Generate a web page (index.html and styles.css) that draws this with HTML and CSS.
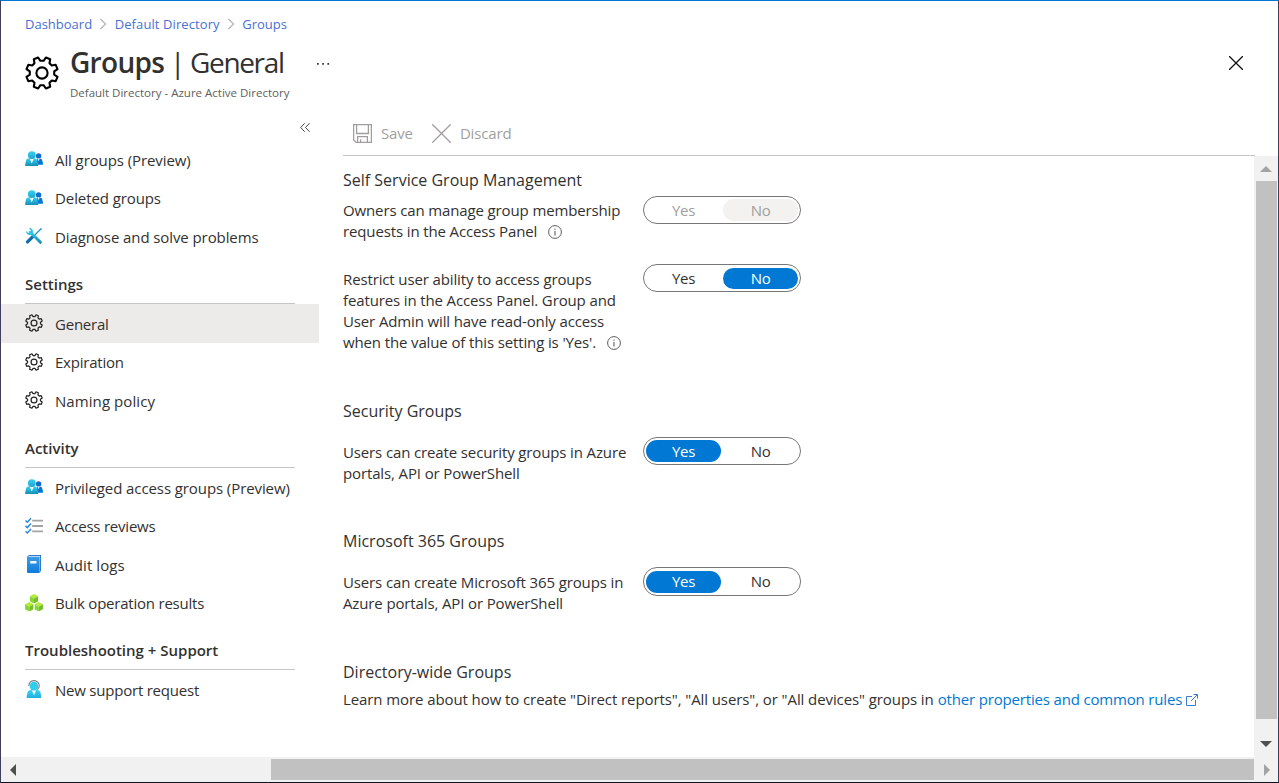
FILE: index.html
```html
<!DOCTYPE html>
<html lang="en">
<head>
<meta charset="utf-8">
<title>Groups | General</title>
<link rel="stylesheet" href="styles.css">
</head>
<body>
<svg class="sprite" width="0" height="0">
  <defs>
    <linearGradient id="g-cyan" x1="0" y1="0" x2="0" y2="1"><stop offset="0" stop-color="#32d4f5"/><stop offset="1" stop-color="#198ab3"/></linearGradient>
    <linearGradient id="g-head" x1="0" y1="0" x2="0" y2="1"><stop offset="0" stop-color="#32d4f5"/><stop offset="1" stop-color="#22a5cb"/></linearGradient>
    <linearGradient id="g-book" x1="0" y1="0" x2="0" y2="1"><stop offset="0" stop-color="#3f9fe8"/><stop offset="1" stop-color="#0f7bdc"/></linearGradient>
    <linearGradient id="g-wrench" gradientUnits="userSpaceOnUse" x1="4" y1="4" x2="16" y2="16"><stop offset="0" stop-color="#32d4f5"/><stop offset="1" stop-color="#198ab3"/></linearGradient>
    <linearGradient id="g-support" x1="0" y1="0" x2="0" y2="1"><stop offset="0" stop-color="#32d4f5"/><stop offset="1" stop-color="#22aede"/></linearGradient>
  </defs>
  <symbol id="gear" viewBox="0 0 34 34">
    <path d="M18.6 4.8L20.9 1.5L25.2 3.3L24.5 7.2L26.8 9.5L30.7 8.8L32.5 13.1L29.2 15.4L29.2 18.6L32.5 20.9L30.7 25.2L26.8 24.5L24.5 26.8L25.2 30.7L20.9 32.5L18.6 29.2L15.4 29.2L13.1 32.5L8.8 30.7L9.5 26.8L7.2 24.5L3.3 25.2L1.5 20.9L4.8 18.6L4.8 15.4L1.5 13.1L3.3 8.8L7.2 9.5L9.5 7.2L8.8 3.3L13.1 1.5L15.4 4.8Z" fill="none" stroke="currentColor" stroke-linejoin="round"/>
    <circle cx="17" cy="17" r="5.6" fill="none" stroke="currentColor"/>
  </symbol>
  <symbol id="people" viewBox="0 0 18 18">
    <circle cx="13.6" cy="5.9" r="2.7" fill="#0f6cd0"/>
    <path d="M10.500 14.800h6.700c.6 0 .9-.4.800-1l-.6-2.900c-.3-1.600-1.300-2.400-2.700-2.400h-2.200z" fill="#0078d4"/>
    <path d="M12.600 8.600l1.100 2.700 1-2.700z" fill="#fff"/>
    <path d="M1 16.100h11.500c.6 0 .9-.5.8-1L12.500 11c-.4-1.700-1.500-2.700-3.200-2.700H4.200C2.500 8.300 1.200 9.300.9 11L.1 15c-.1.600.3 1.100.9 1.100z" fill="url(#g-cyan)"/>
    <path d="M4.700 8.400l2 5 2.100-5z" fill="#fff"/>
    <circle cx="6.800" cy="5.100" r="3.900" fill="url(#g-head)"/>
  </symbol>
  <symbol id="tools" viewBox="0 0 18 18">
    <path d="M15.600 1.300L9.700 7.300l.8.900 6-5.900.3-1.300z" fill="#1b93bf"/>
    <path d="M8.300 9.100L2.500 14.900" stroke="#0f6dad" stroke-width="3.300" stroke-linecap="round"/>
    <path d="M5.300 5.300L15.400 15.300" stroke="url(#g-wrench)" stroke-width="3" stroke-linecap="round"/>
    <path d="M3.700 1.100L6 3.400 5.400 5.300 3.500 5.900 1.200 3.700C.8 6.800 3.100 8.600 5.600 8l2.300-2.200C8.500 3 6.700.6 3.700 1.100z" fill="#2cc5e8"/>
  </symbol>
  <symbol id="checks" viewBox="0 0 18 18">
    <path d="M7.200 3.600H18M7.200 9H18M7.200 14.400H18" stroke="#a3a3a3" stroke-width="1.900"/>
    <path d="M.5 3.500L2.300 5.200 6 1.200M.5 8.900l1.800 1.700L6 6.600M.5 14.300L2.300 16 6 12" fill="none" stroke="#2b88e0" stroke-width="1.500"/>
  </symbol>
  <symbol id="book" viewBox="0 0 18 18">
    <path d="M3.500 0H16v16.500H3.500z" fill="#1d6fc0"/>
    <path d="M4 .9h11.100V16H4z" fill="#d9ecfb"/>
    <path d="M2.400.6c0 1 .5 1.200 1.300 1.200H14.600V18H3.300c-.8 0-1.300-.5-1.300-1.300V1.300z" fill="url(#g-book)"/>
    <path d="M5.200 6h6.300v2.500H5.200z" fill="#f2f9ff"/>
  </symbol>
  <symbol id="cube" viewBox="0 0 8 9">
    <path d="M4 0L8 2.100 4 4.300 0 2.100z" fill="#b4ec36"/>
    <path d="M0 2.100L4 4.300V9L0 6.800z" fill="#86d633"/>
    <path d="M8 2.100L4 4.300V9L8 6.800z" fill="#76bc2d"/>
  </symbol>
  <symbol id="cubes" viewBox="0 0 18 18">
    <use href="#cube" x="4.700" y="0" width="8.600" height="9.500"/>
    <use href="#cube" x="0" y="8.100" width="8.600" height="9.500"/>
    <use href="#cube" x="9.400" y="8.100" width="8.600" height="9.500"/>
  </symbol>
  <symbol id="support" viewBox="0 0 18 18">
    <path d="M3.900 6C3.600 2.600 5.800.6 8.900.6s5.600 2 5.300 5.400c0 1.700-.6 2.800-2 3.400" fill="none" stroke="#767676" stroke-width="1.100"/>
    <path d="M2.200 18h13.400c.5 0 .8-.4.700-.9l-.7-4c-.4-2-1.700-3.200-3.600-3.200H6c-2 0-3.300 1.200-3.600 3.200l-.8 4c-.1.500.1.900.6.900z" fill="url(#g-support)"/>
    <path d="M6.800 10.200L9 15.200l2.100-5z" fill="#fff"/>
    <circle cx="8.900" cy="6.100" r="4.300" fill="#2fcdf0"/>
  </symbol>
  <symbol id="info" viewBox="0 0 14 14">
    <circle cx="7" cy="7" r="6.400" fill="none" stroke="currentColor"/>
    <path d="M7 6v4.500M7 3.600v1.200" stroke="currentColor" stroke-width="1.100"/>
  </symbol>
  <symbol id="chevron" viewBox="0 0 6 12"><path d="M.5 1l5 5-5 5" fill="none" stroke="currentColor"/></symbol>
</svg>

<div class="window">
  <header class="header">
    <nav class="crumbs">
      <a>Dashboard</a><svg><use href="#chevron"/></svg>
      <a class="crumb-wide">Default Directory</a><svg><use href="#chevron"/></svg>
      <a>Groups</a>
    </nav>
    <div class="title-row">
      <svg class="title-icon"><use href="#gear"/></svg>
      <div class="titles">
        <h1 class="title"><b>Groups</b><span> | General</span></h1>
        <div class="subtitle">Default Directory - Azure Active Directory</div>
      </div>
      <svg class="more" viewBox="0 0 14 4"><path d="M1 1h1.700v1.700H1zM6.200 1h1.700v1.700H6.200zM11.400 1h1.700v1.700h-1.700z"/></svg>
      <svg class="close" viewBox="0 0 14 14"><path d="M0 0l14 14M14 0L0 14"/></svg>
    </div>
  </header>

  <div class="main">
    <aside class="sidebar">
      <div class="collapse"><svg viewBox="0 0 10 9"><path d="M4.700.3L.7 4.500l4 4.200M9.500.3l-4 4.200 4 4.200"/></svg></div>
      <a class="item"><svg><use href="#people"/></svg><span>All groups (Preview)</span></a>
      <a class="item"><svg><use href="#people"/></svg><span>Deleted groups</span></a>
      <a class="item"><svg><use href="#tools"/></svg><span>Diagnose and solve problems</span></a>
      <h2 class="group">Settings</h2>
      <a class="item selected tight"><svg><use href="#gear"/></svg><span>General</span></a>
      <a class="item tight"><svg><use href="#gear"/></svg><span>Expiration</span></a>
      <a class="item loose"><svg><use href="#gear"/></svg><span>Naming policy</span></a>
      <h2 class="group">Activity</h2>
      <a class="item"><svg><use href="#people"/></svg><span>Privileged access groups (Preview)</span></a>
      <a class="item tight"><svg><use href="#checks"/></svg><span>Access reviews</span></a>
      <a class="item loose"><svg><use href="#book"/></svg><span>Audit logs</span></a>
      <a class="item tight"><svg><use href="#cubes"/></svg><span>Bulk operation results</span></a>
      <h2 class="group last">Troubleshooting + Support</h2>
      <a class="item tight"><svg><use href="#support"/></svg><span>New support request</span></a>
    </aside>

    <section class="content">
      <div class="commands">
        <span class="command"><svg viewBox="0 0 19 19"><path d="M.6.6h17.800v17.800H3.100L.6 15.900zM3.600.6v8.900h11.800V.6M4.600 18.400v-5.800h9.800v5.800M7.600 18v-2.800"/></svg><span>Save</span></span>
        <span class="command"><svg viewBox="0 0 19 19"><path d="M.3.300l18.400 18.400M18.700.3L.3 18.700"/></svg><span>Discard</span></span>
      </div>
      <div class="pane">
        <div class="form">
          <h3 class="heading">Self Service Group Management</h3>
          <div class="row row-owners">
            <p class="label">Owners can manage group membership<br>requests in the Access Panel<svg class="info"><use href="#info"/></svg></p>
            <div class="toggle disabled"><span>Yes</span><span class="on">No</span></div>
          </div>
          <div class="row row-restrict">
            <p class="label">Restrict user ability to access groups<br>features in the Access Panel. Group and<br>User Admin will have read-only access<br>when the value of this setting is 'Yes'.<svg class="info"><use href="#info"/></svg></p>
            <div class="toggle"><span>Yes</span><span class="on">No</span></div>
          </div>
          <h3 class="heading">Security Groups</h3>
          <div class="row row-security">
            <p class="label">Users can create security groups in Azure<br>portals, API or PowerShell</p>
            <div class="toggle"><span class="on">Yes</span><span>No</span></div>
          </div>
          <h3 class="heading">Microsoft 365 Groups</h3>
          <div class="row row-m365">
            <p class="label">Users can create Microsoft 365 groups in<br>Azure portals, API or PowerShell</p>
            <div class="toggle"><span class="on">Yes</span><span>No</span></div>
          </div>
          <h3 class="heading">Directory-wide Groups</h3>
          <p class="learn"><span>Learn more about how to create "Direct reports", "All users", or "All devices" groups in</span> <a>other properties and common rules</a><svg class="ext" viewBox="0 0 12 12"><path d="M6 2.500H.5v9h9V6M7.500.5h4v4M11.500.5L5 7"/></svg></p>
        </div>
        <div class="vscroll">
          <svg viewBox="0 0 12 6"><path d="M6 0l6 6H0z" fill="#a3a3a3"/></svg>
          <i class="thumb"></i>
          <svg viewBox="0 0 12 6"><path d="M0 0h12L6 6z" fill="#505050"/></svg>
        </div>
      </div>
    </section>
  </div>
  <div class="hscroll">
    <svg viewBox="0 0 6 12"><path d="M6 0v12L0 6z" fill="#505050"/></svg>
    <i class="thumb"></i>
    <svg viewBox="0 0 6 12"><path d="M0 0v12l6-6z" fill="#a3a3a3"/></svg>
  </div>
</div>
</body>
</html>
```
FILE: styles.css
```css
* { box-sizing: border-box; }
body { margin: 0; font-family: "Open Sans", "Noto Sans", sans-serif; font-size: 15px; line-height: 21px; color: #323130; background: #fff; }
h1, h2, h3, p { margin: 0; font-weight: 400; }
svg { display: block; flex: none; }
.sprite { position: absolute; }

.window { display: flex; flex-direction: column; width: 1279px; height: 783px; overflow: hidden; border: 1px solid #3d4058; border-top-color: #0078d4; border-bottom-color: #101020; }
.header { height: 111px; flex: none; padding: 13px 35px 0 24px; }
.crumbs { display: flex; align-items: center; height: 20px; font-size: 13px; line-height: 20px; color: #4a6fd4; }
.crumbs svg { width: 6px; height: 12px; margin: 0 8.300px; color: #808080; }
.crumb-wide { letter-spacing: .09px; }
.title-row { display: flex; align-items: flex-start; height: 78px; }
.title-icon { width: 34px; height: 34px; margin-top: 22px; color: #000; stroke-width: 2.1; }
.titles { width: 219px; margin-left: 11px; white-space: nowrap; }
.title { font-size: 28px; line-height: 40px; margin-top: 8px; white-space: pre; letter-spacing: -1.350px; }
.title b { font-weight: 600; letter-spacing: -.7px; }
.subtitle { font-size: 11.5px; line-height: 16px; margin-top: 3px; color: #605e5c; }
.more { width: 14px; height: 4px; margin: 28px 0 0 27px; fill: #323130; }
.close { width: 14px; height: 14px; margin: 22px 0 0 auto; stroke: #111; stroke-width: 1.3; }

.main { display: flex; flex: 1; min-height: 0; }
.sidebar { width: 318px; flex: none; letter-spacing: -.09px; }
.collapse { display: flex; justify-content: flex-end; height: 28.6px; padding: 11px 9px 0 0; }
.collapse svg { width: 10px; height: 9px; fill: none; stroke: #444; stroke-width: 1; }
.item { display: flex; align-items: center; height: 38.5px; padding: 1px 0 0 24px; white-space: nowrap; }
.item svg { width: 18px; height: 18px; margin: -2px 12px 0 0; color: #222; stroke-width: 2.3; }
.item.tight { letter-spacing: -.22px; }
.item.loose { letter-spacing: .08px; }
.selected { background: #edebe9; }
.group { height: 48.35px; margin: 0 24px; padding-top: 18px; border-bottom: 1px solid #c8c6c4; font-size: 15px; font-weight: 600; line-height: 21px; letter-spacing: 0; }
.group.last { height: 48px; }

.content { display: flex; flex-direction: column; flex: 1; min-width: 0; }
.commands { display: flex; align-items: center; height: 44px; margin: 0 23px 0 24px; padding-left: 10px; border-bottom: 1px solid #c8c6c4; color: #a19f9d; letter-spacing: -.15px; }
.command { display: flex; align-items: center; margin-right: 19px; }
.command svg { width: 19px; height: 19px; margin: -1px 9px 0 0; fill: none; stroke: #a19f9d; stroke-width: 1.3; }
.pane { display: flex; flex: 1; min-height: 0; }
.form { flex: 1; min-width: 0; padding: 14px 0 0 24px; }
.heading { font-size: 16px; line-height: 21px; }
.row { display: grid; grid-template-columns: 300px 158px; align-items: start; white-space: nowrap; }
.row-owners { margin-top: 5px; height: 68px; }
.row-restrict { height: 137px; }
.row-security { margin-top: 15px; height: 94px; }
.row-m365 { margin-top: 15px; height: 95px; }
.label { padding-top: 5px; letter-spacing: -.13px; }
.row-owners .label { padding-top: 4px; }
.info { display: inline-block; width: 14px; height: 14px; margin-left: 11px; vertical-align: -2px; color: #605e5c; }
.toggle { display: grid; grid-template-columns: 75px 75px; justify-content: space-between; height: 28px; padding: 2px; border: 1px solid #797775; border-radius: 14px; line-height: 22px; letter-spacing: -.3px; text-align: center; }
.toggle .on { border-radius: 11px; background: #0078d4; color: #fff; }
.toggle.disabled { color: #a19f9d; }
.toggle.disabled .on { background: #f3f2f1; color: #a19f9d; }
.row-restrict .toggle { padding-top: 3px; line-height: 21px; }
.row-m365 .toggle { height: 29px; padding-top: 3px; line-height: 21px; }
.learn { display: flex; gap: 4px; margin-top: 6px; white-space: nowrap; letter-spacing: -.09px; }
.learn a { color: #0078d4; letter-spacing: -.17px; }
.ext { width: 12px; height: 12px; margin-top: 5px; fill: none; stroke: #3a7bd5; }

.vscroll { display: flex; flex-direction: column; align-items: center; width: 24px; padding: 10px 0 10px; background: #f1f1f1; }
.vscroll svg { width: 12px; height: 6px; }
.vscroll .thumb { width: 21px; height: 538px; margin: 9px 0 auto; background: #c1c1c1; }
.hscroll { display: flex; align-items: center; height: 25px; flex: none; padding: 0 8px 0 9px; background: #f1f1f1; }
.hscroll svg { width: 6px; height: 12px; }
.hscroll .thumb { width: 983px; height: 21px; margin: 0 auto 0 255px; background: #c1c1c1; }
```
